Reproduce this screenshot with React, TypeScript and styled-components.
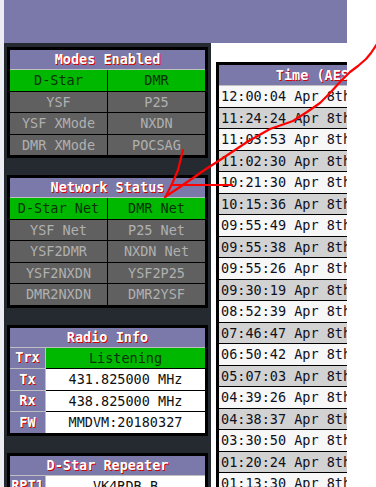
import React from 'react';
import styled, { createGlobalStyle } from 'styled-components';

const GlobalStyle = createGlobalStyle`
  html, body {
    margin: 0;
    padding: 0;
    background: #ffffff;
  }
  body {
    font-family: "DejaVu Sans Mono", "Liberation Mono", monospace;
    font-size: 13.5px;
  }
`;

const Page = styled.div`
  position: relative;
  display: flex;
  width: 376px;
  height: 487px;
  overflow: hidden;
  background: #ffffff;
`;

const Strip = styled.div`
  width: 4px;
  flex-shrink: 0;
  background: #eceef3;
`;

const Frame = styled.div`
  width: 343px;
  flex-shrink: 0;
  display: flex;
  flex-direction: column;
  overflow: hidden;
`;

const Banner = styled.div`
  height: 43px;
  flex-shrink: 0;
  background: #7a79a9;
`;

const Content = styled.div`
  display: flex;
  flex: 1;
  min-height: 0;
`;

const Sidebar = styled.div`
  width: 207px;
  flex-shrink: 0;
  box-sizing: border-box;
  padding: 4px 3px 0 3px;
  background: #242a30;
  display: flex;
  flex-direction: column;
  gap: 17px;
`;

const Main = styled.div`
  flex: 1;
  min-width: 0;
  overflow: hidden;
  padding: 19px 0 0 5px;
  background: #ffffff;
`;

const Table = styled.table<{ $width?: number }>`
  border-collapse: collapse;
  border: 3px solid #000;
  width: ${p => (p.$width ? `${p.$width}px` : '100%')};
  table-layout: fixed;
  font-family: "DejaVu Sans Mono", "Liberation Mono", monospace;
  font-size: 13.5px;
`;

const Th = styled.th`
  background: #7a79a9;
  color: #ffffff;
  font-weight: bold;
  text-shadow: 1px 1px #d00000;
  border: 1px solid #c0c0c0;
  height: 19px;
  padding: 0;
  line-height: 19px;
  text-align: center;
  white-space: nowrap;
`;

const Cell = styled.td<{ $state?: 'on' | 'off' | 'plain' }>`
  border: 1px solid #000;
  height: 20.5px;
  padding: 0;
  line-height: 20px;
  text-align: center;
  white-space: nowrap;
  overflow: hidden;
  background: ${p => (p.$state === 'on' ? '#00b800' : p.$state === 'off' ? '#606060' : '#ffffff')};
  color: ${p => (p.$state === 'on' ? '#073307' : p.$state === 'off' ? '#b0b0b0' : '#111111')};
`;

const HeardRow = styled.tr<{ $alt: boolean }>`
  background: ${p => (p.$alt ? '#d2d2d2' : '#f7f7f7')};
`;

const HeardTh = styled(Th)`
  height: 20px;
  line-height: 20px;
`;

const HeardCell = styled.td`
  border: 1px solid #000;
  height: 20.5px;
  padding: 0 0 0 2px;
  line-height: 20px;
  text-align: left;
  white-space: nowrap;
  color: #10101c;
`;

const Overlay = styled.svg`
  position: absolute;
  top: 0;
  left: 0;
  pointer-events: none;
`;

type Mode = { name: string; on: boolean };

const modes: Mode[][] = [
  [{ name: 'D-Star', on: true }, { name: 'DMR', on: true }],
  [{ name: 'YSF', on: false }, { name: 'P25', on: false }],
  [{ name: 'YSF XMode', on: false }, { name: 'NXDN', on: false }],
  [{ name: 'DMR XMode', on: false }, { name: 'POCSAG', on: false }],
];

const networks: Mode[][] = [
  [{ name: 'D-Star Net', on: true }, { name: 'DMR Net', on: true }],
  [{ name: 'YSF Net', on: false }, { name: 'P25 Net', on: false }],
  [{ name: 'YSF2DMR', on: false }, { name: 'NXDN Net', on: false }],
  [{ name: 'YSF2NXDN', on: false }, { name: 'YSF2P25', on: false }],
  [{ name: 'DMR2NXDN', on: false }, { name: 'DMR2YSF', on: false }],
];

type Info = { label: string; value: string; state: 'on' | 'plain' };

const radio: Info[] = [
  { label: 'Trx', value: 'Listening', state: 'on' },
  { label: 'Tx', value: '431.825000 MHz', state: 'plain' },
  { label: 'Rx', value: '438.825000 MHz', state: 'plain' },
  { label: 'FW', value: 'MMDVM:20180327', state: 'plain' },
];

const repeater: Info[] = [
  { label: 'RPT1', value: 'VK4RDB B', state: 'plain' },
  { label: 'RPT2', value: 'VK4RDB G', state: 'plain' },
];

const times = [
  '12:00:04', '11:24:24', '11:03:53', '11:02:30', '10:21:30', '10:15:36',
  '09:55:49', '09:55:38', '09:55:26', '09:30:19', '08:52:39', '07:46:47',
  '06:50:42', '05:07:03', '04:39:26', '04:38:37', '03:30:50', '01:20:24',
  '01:13:30',
];

const StatusTable: React.FC<{ title: string; rows: Mode[][] }> = ({ title, rows }) => (
  <Table>
    <thead>
      <tr><Th colSpan={2}>{title}</Th></tr>
    </thead>
    <tbody>
      {rows.map((row, i) => (
        <tr key={i}>
          {row.map(m => (
            <Cell key={m.name} $state={m.on ? 'on' : 'off'}>{m.name}</Cell>
          ))}
        </tr>
      ))}
    </tbody>
  </Table>
);

const InfoTable: React.FC<{ title: string; rows: Info[] }> = ({ title, rows }) => (
  <Table>
    <colgroup>
      <col style={{ width: 37 }} />
      <col />
    </colgroup>
    <thead>
      <tr><Th colSpan={2}>{title}</Th></tr>
    </thead>
    <tbody>
      {rows.map(r => (
        <tr key={r.label}>
          <Th>{r.label}</Th>
          <Cell $state={r.state}>{r.value}</Cell>
        </tr>
      ))}
    </tbody>
  </Table>
);

const App: React.FC = () => {
  return (
    <>
      <GlobalStyle />
      <Page>
        <Strip />
        <Frame>
          <Banner />
          <Content>
            <Sidebar>
              <StatusTable title="Modes Enabled" rows={modes} />
              <StatusTable title="Network Status" rows={networks} />
              <InfoTable title="Radio Info" rows={radio} />
              <InfoTable title="D-Star Repeater" rows={repeater} />
            </Sidebar>

            <Main>
              <Table $width={520}>
                <colgroup>
                  <col style={{ width: 205 }} />
                  <col style={{ width: 90 }} />
                  <col />
                </colgroup>
                <thead>
                  <tr>
                    <HeardTh>Time (AEST)</HeardTh>
                    <HeardTh>Mode</HeardTh>
                    <HeardTh>Callsign</HeardTh>
                  </tr>
                </thead>
                <tbody>
                  {times.map((t, i) => (
                    <HeardRow key={t} $alt={i % 2 === 1}>
                      <HeardCell>{t} Apr 8th</HeardCell>
                      <HeardCell>D-Star</HeardCell>
                      <HeardCell>VK4RDB</HeardCell>
                    </HeardRow>
                  ))}
                </tbody>
              </Table>
            </Main>
          </Content>
        </Frame>

        {/* red annotation strokes drawn on top of the screenshot */}
        <Overlay width={376} height={487} viewBox="0 0 376 487">
          <g fill="none" stroke="#f00" strokeWidth={2.2} strokeLinecap="round" strokeLinejoin="round">
            <polyline points="377,44 371,53 366,59 358,66 350,72 340,82 330,93 320,103 307,112 293,121 270,129 247,142 223,158 203,171 180,187 165,197" />
            <polyline points="232,185 215,185 195,185 172,185" />
            <polyline points="183,150 181,158 178,170 172,184 166,196" />
          </g>
        </Overlay>
      </Page>
    </>
  );
};

export default App;
